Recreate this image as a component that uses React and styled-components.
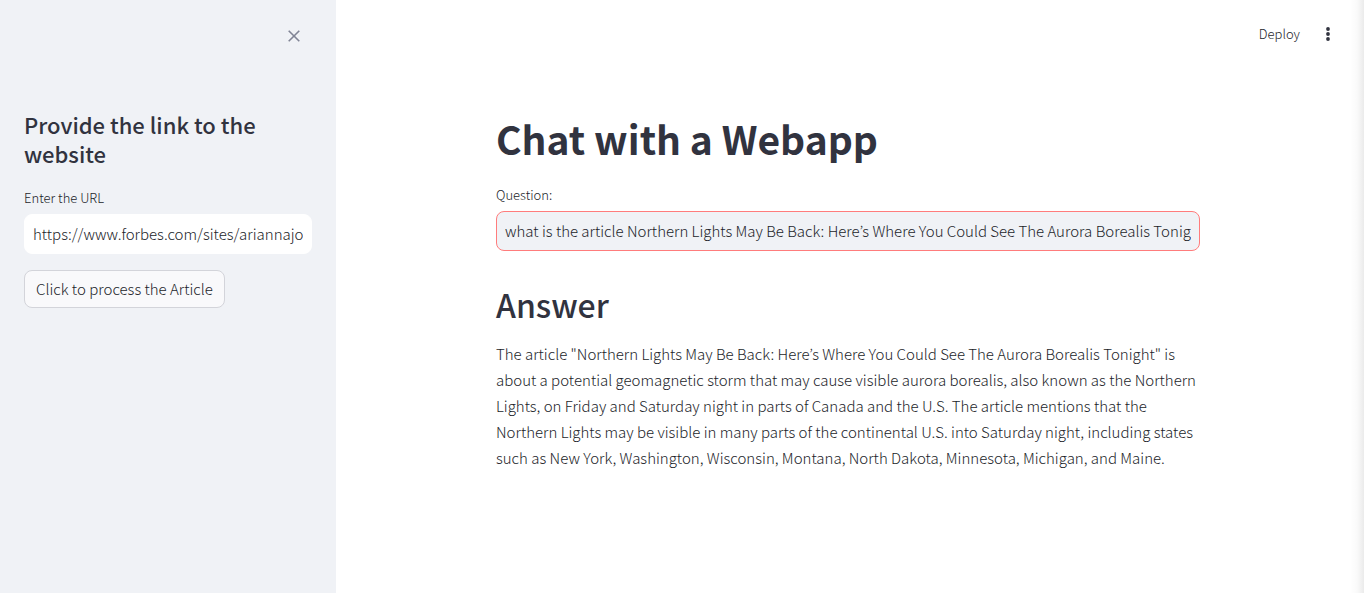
import React from "react";
import styled, { createGlobalStyle } from "styled-components";

const Global = createGlobalStyle`
  * { box-sizing: border-box; }
  body { margin: 0; color: #31333f; background: #fff;
    font-family: "Noto Sans CJK KR", "Noto Sans", sans-serif; font-size: 15px; font-weight: 300; }
  button, input { font: inherit; color: inherit; }
`;
const ink = "#1c1e2a";
const Page = styled.div`
  display: flex; min-height: 100vh; position: relative; padding-right: 4px;
`;
const EdgeShadow = styled.div`
  position: absolute; top: 0; right: 0; bottom: 0; width: 14px; pointer-events: none;
  background: linear-gradient(to right, rgba(0, 0, 0, 0), rgba(0, 0, 0, 0.02) 50%, rgba(0, 0, 0, 0.08));
`;
const Sidebar = styled.aside`
  width: 336px; flex: none; background: #f0f2f6; padding: 24px;
`;
const SidebarHeader = styled.div`
  display: flex; justify-content: flex-end; height: 86px; padding-right: 6px;
`;
const IconButton = styled.button`
  display: grid; place-items: center; width: 24px; height: 24px; padding: 0;
  border: 0; background: none; color: ${(p) => p.$color || "#31333f"}; cursor: pointer;
`;
const Title = styled.h1`
  margin: 0 0 20px; font-size: 39px; font-weight: 700; line-height: 50px;
`;
const AnswerTitle = styled.h2`
  margin: 28px 0 12px; font-size: 32px; font-weight: 500; line-height: 50px;
`;
const SidebarTitle = styled.h3`
  margin: 0 0 18px; font-size: 22px; font-weight: 500; line-height: 29px;
`;
const Label = styled.label`
  display: block; color: ${ink}; font-size: 13px; line-height: 24px;
`;
const TextInput = styled.input`
  display: block; width: 100%; height: 40px; margin-top: 4px; padding: 0 8px 2px; outline: 0;
  border: 1px solid ${(p) => (p.$focused ? "#ff7c7c" : "#fff")}; border-radius: 8px;
  background: ${(p) => (p.$focused ? "#f0f2f6" : "#fff")}; color: ${ink};
`;
const Button = styled.button`
  margin-top: 16px; height: 38px; padding: 0 11px 2px; border: 1px solid #d3d4da; border-radius: 8px;
  background: #f9f9fb; color: ${ink}; cursor: pointer;
`;
const Main = styled.main`
  flex: 1; min-width: 0;
`;
const Toolbar = styled.header`
  display: flex; justify-content: flex-end; align-items: center; gap: 16px;
  height: 68px; padding-right: 20px;
`;
const Deploy = styled.button`
  border: 0; background: none; padding: 0 0 2px; color: ${ink}; font-size: 13px; cursor: pointer;
`;
const Content = styled.div`
  max-width: 704px; margin: 0 auto; padding-top: 45px;
`;
const Answer = styled.p`
  margin: 0; color: ${ink}; line-height: 26px;
`;

export default function App() {
  return (
    <>
      <Global />
      <Page>
        <Sidebar>
          <SidebarHeader>
            <IconButton aria-label="Close sidebar" $color="#808495">
              <svg width="12" height="12" viewBox="0 0 12 12" fill="none" stroke="currentColor" strokeWidth="1.6">
                <path d="M.7.7l10.6 10.6M11.3.7L.7 11.3" />
              </svg>
            </IconButton>
          </SidebarHeader>
          <SidebarTitle>Provide the link to the website</SidebarTitle>
          <Label htmlFor="url">Enter the URL</Label>
          <TextInput id="url" defaultValue="https://www.forbes.com/sites/ariannajohnson/" />
          <Button>Click to process the Article</Button>
        </Sidebar>
        <Main>
          <Toolbar>
            <Deploy>Deploy</Deploy>
            <IconButton aria-label="Main menu">
              <svg width="16" height="16" viewBox="0 0 16 16" fill="currentColor">
                <circle cx="8" cy="3" r="1.9" /><circle cx="8" cy="8" r="1.9" /><circle cx="8" cy="13" r="1.9" />
              </svg>
            </IconButton>
          </Toolbar>
          <Content>
            <Title>Chat with a Webapp</Title>
            <Label htmlFor="question">Question:</Label>
            <TextInput id="question" $focused defaultValue="what is the article Northern Lights May Be Back: Here’s Where You Could See The Aurora Borealis Tonight" />
            <AnswerTitle>Answer</AnswerTitle>
            <Answer>
              The article "Northern Lights May Be Back: Here’s Where You Could See The Aurora Borealis Tonight" is about a potential geomagnetic storm that may cause visible aurora borealis, also known as the Northern Lights, on Friday and Saturday night in parts of Canada and the U.S. The article mentions that the Northern Lights may be visible in many parts of the continental U.S. into Saturday night, including states such as New York, Washington, Wisconsin, Montana, North Dakota, Minnesota, Michigan, and Maine.
            </Answer>
          </Content>
        </Main>
        <EdgeShadow />
      </Page>
    </>
  );
}
